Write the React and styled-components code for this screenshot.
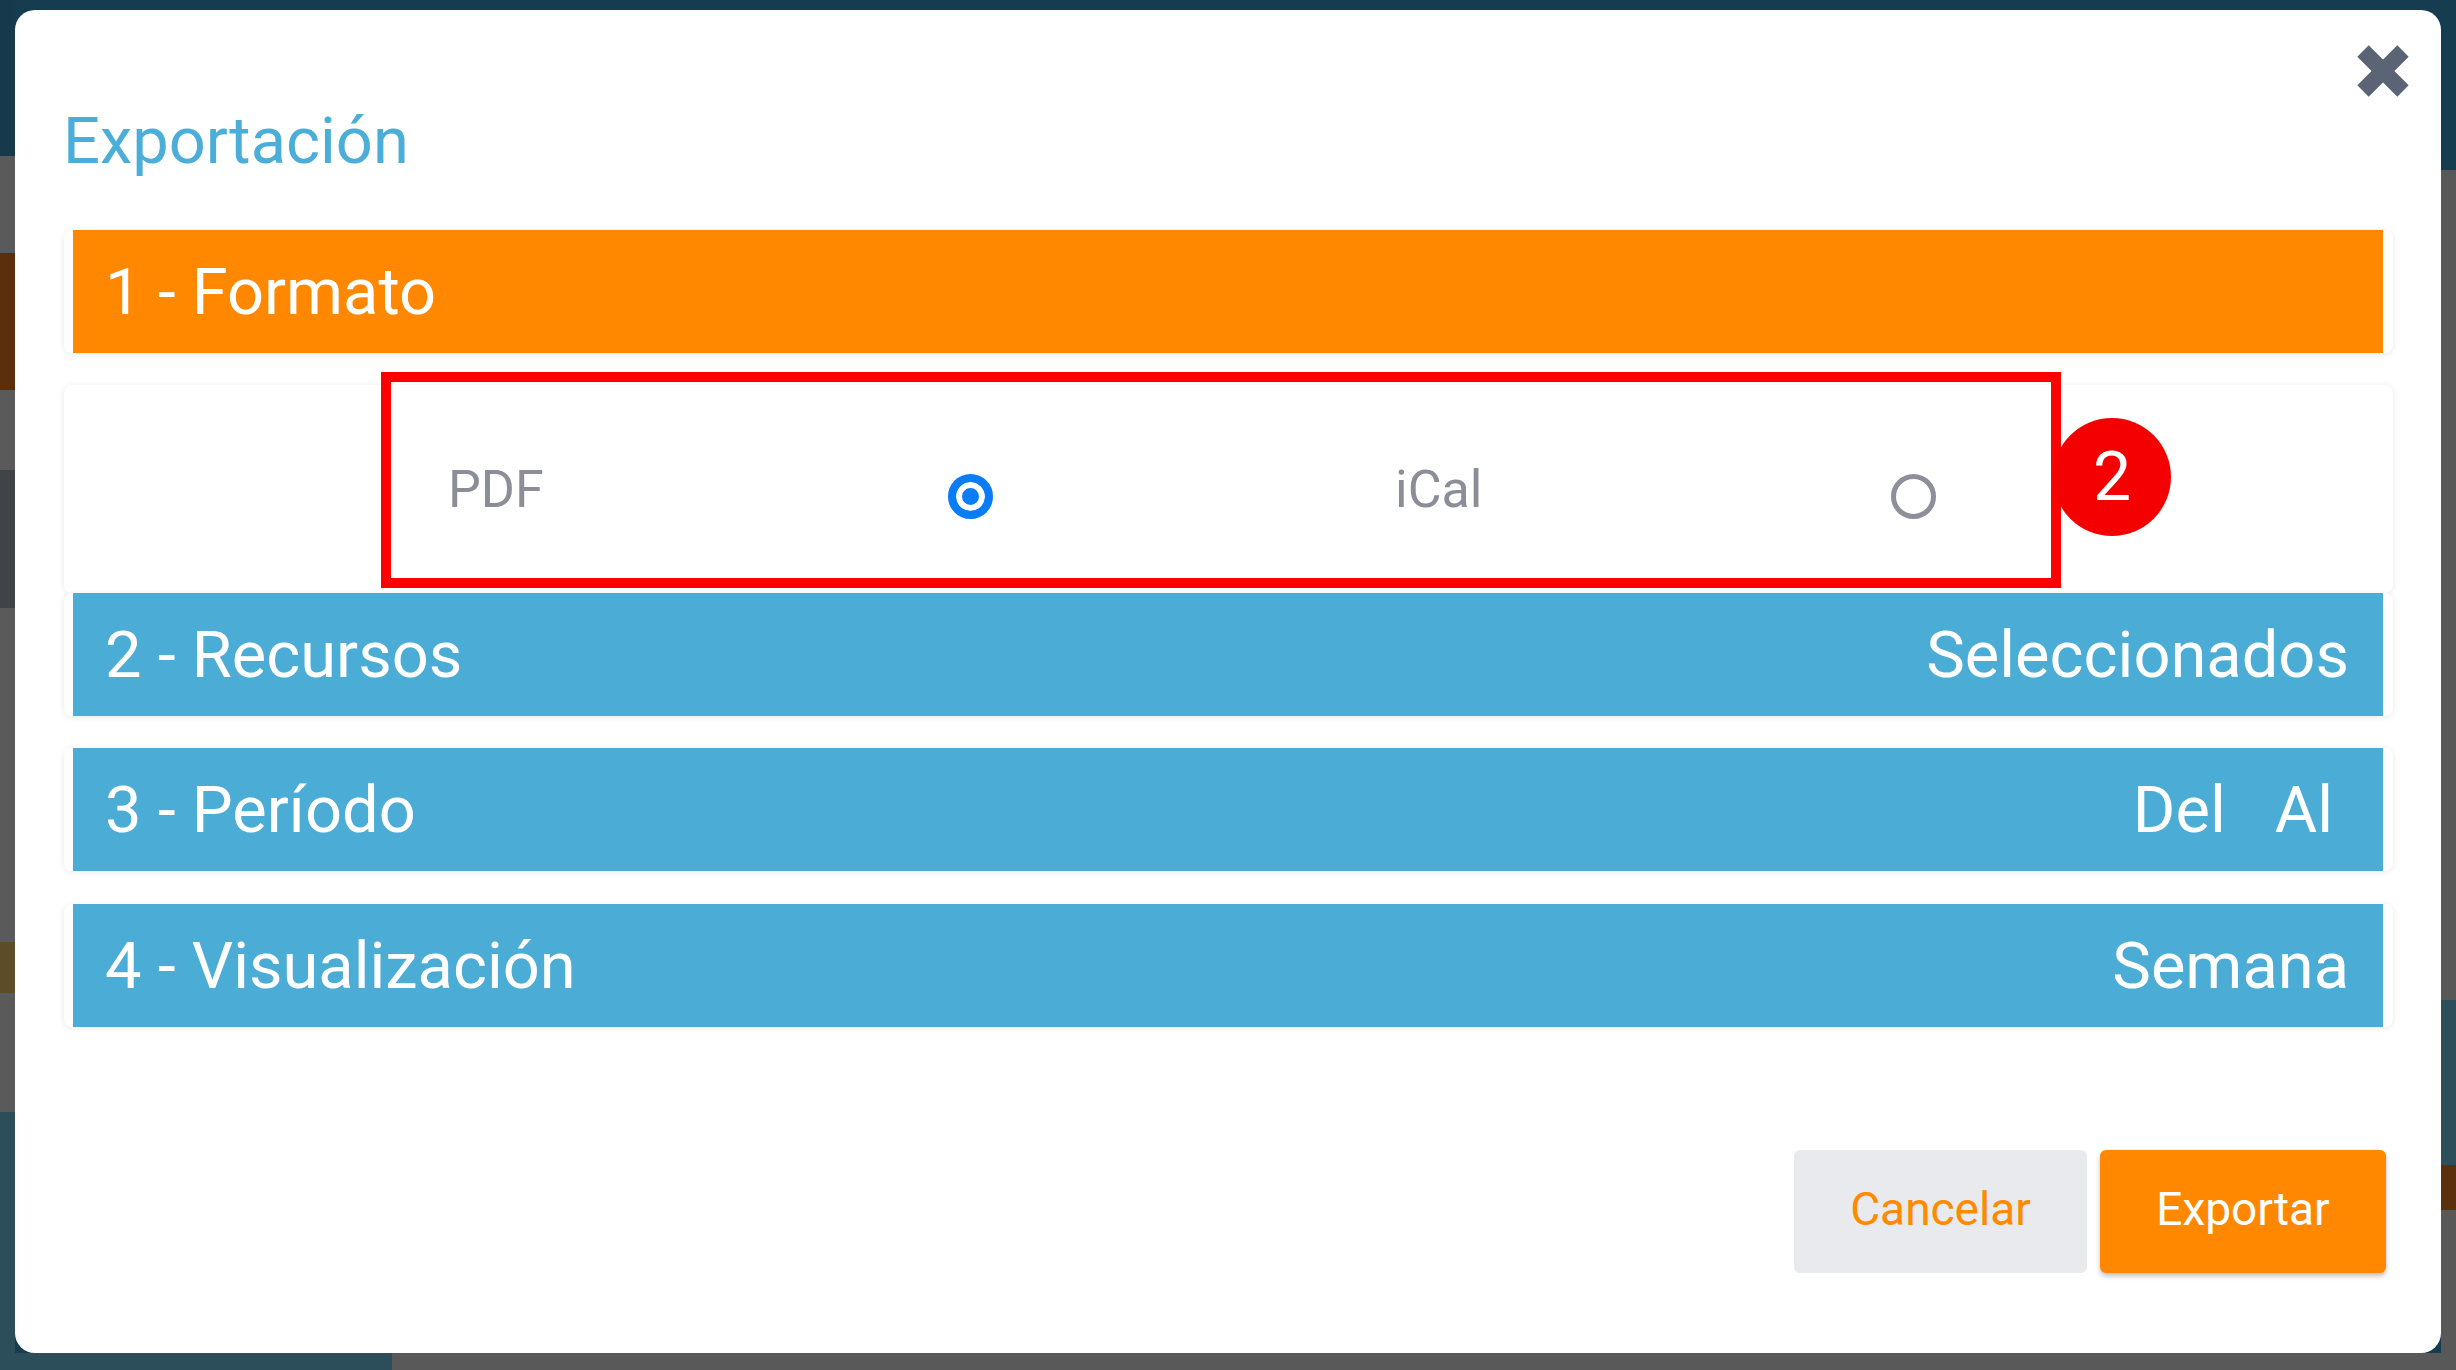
import React from 'react';
import styled, { createGlobalStyle } from 'styled-components';

const Global = createGlobalStyle`
  html, body {
    margin: 0;
    padding: 0;
  }
  body {
    font-family: Roboto, "Liberation Sans", sans-serif;
  }
`

const Backdrop = styled.div`
  box-sizing: border-box;
  width: 2456px;
  height: 1370px;
  padding: 10px 15px 17px 15px;
  background:
    linear-gradient(to bottom,
      #163a4c 0 156px, #5a5a5a 156px 253px, #5b2f0b 253px 390px,
      #5a5a5a 390px 470px, #404347 470px 608px, #5a5a5a 608px 942px,
      #5d4c28 942px 993px, #5a5a5a 993px 1112px, #2c4e5b 1112px) 0 0 / 15px 100% no-repeat,
    linear-gradient(to bottom,
      #163c50 0 170px, #585858 170px 1000px, #2d4f5c 1000px 1165px,
      #5b300c 1165px 1210px, #585858 1210px) right 0 top 0 / 15px 100% no-repeat,
    linear-gradient(to right, #2c4e5b 0 392px, #595959 392px) 0 100% / 100% 17px no-repeat,
    #163c50;
`

const Modal = styled.div`
  box-sizing: border-box;
  height: 100%;
  background: #fff;
  border-radius: 20px;
  padding: 35px 48px 0 49px;
  display: flex;
  flex-direction: column;
`

const TopBar = styled.div`
  display: flex;
  justify-content: flex-end;
  margin-right: -16px;
  height: 52px;
`

const CloseButton = styled.button`
  border: 0;
  background: none;
  padding: 0;
  width: 52px;
  height: 52px;
  cursor: pointer;
  display: block;
`

const Title = styled.h2`
  margin: 7px 0 0 -1px;
  font-size: 65px;
  line-height: 75px;
  font-weight: 400;
  color: #4aaed8;
`

const Accordion = styled.div`
  margin-top: 51px;
  display: flex;
  flex-direction: column;
`

const Card = styled.div`
  position: relative;
  background: #fff;
  border-radius: 8px;
  box-shadow: 0 1px 6px rgba(0, 0, 0, 0.09);
  margin-top: ${p => p.$gap || 0}px;
`

const HeaderBar = styled.div`
  box-sizing: border-box;
  height: 123px;
  margin: 0 10px 0 9px;
  padding: 0 34px 0 32px;
  display: flex;
  align-items: center;
  justify-content: space-between;
  background: ${p => (p.$active ? '#ff8800' : '#4badd5')};
  color: #fff;
  font-size: 65px;
  line-height: 76px;
`

const Range = styled.div`
  display: flex;
  gap: 49px;
  margin-right: 16px;
`

const Body = styled.div`
  box-sizing: border-box;
  height: 208px;
  padding-left: 384px;
  display: flex;
  align-items: center;
  gap: 402px;
`

const Option = styled.label`
  display: flex;
  align-items: center;
`

const OptionLabel = styled.span`
  width: ${p => p.$width}px;
  font-size: 52px;
  line-height: 61px;
  color: #8b8e97;
`

const Radio = styled.span`
  box-sizing: border-box;
  width: 45px;
  height: 45px;
  border-radius: 50%;
  margin-top: 14px;
  border: ${p => (p.$checked ? '8px solid #0a7cf6' : '5px solid #8e8f9b')};
  background: ${p => (p.$checked ? '#0a7cf6' : '#fff')};
  box-shadow: ${p => (p.$checked ? 'inset 0 0 0 6px #fff' : 'none')};
`

const Highlight = styled.div`
  position: absolute;
  left: 317px;
  top: -13px;
  width: 1680px;
  height: 216px;
  box-sizing: border-box;
  border: 10px solid #ff0000;
  pointer-events: none;
`

const Badge = styled.div`
  position: absolute;
  left: 1989px;
  top: 33px;
  width: 118px;
  height: 118px;
  border-radius: 50%;
  background: #f50000;
  color: #fff;
  font-size: 68px;
  line-height: 118px;
  text-align: center;
`

const Footer = styled.div`
  margin-top: 123px;
  margin-right: 7px;
  display: flex;
  justify-content: flex-end;
  gap: 13px;
`

const Button = styled.button`
  height: 123px;
  width: ${p => p.$width}px;
  border: 0;
  border-radius: 6px;
  padding: 0 0 5px;
  font-family: Roboto, "Liberation Sans", sans-serif;
  font-size: 46px;
  cursor: pointer;
  background: ${p => (p.$primary ? '#ff8800' : '#e9eaee')};
  color: ${p => (p.$primary ? '#fff' : '#ff8a00')};
  box-shadow: ${p => (p.$primary ? '0 3px 5px rgba(0,0,0,0.25)' : 'none')};
`

const CloseIcon = () => (
  <svg width="52" height="52" viewBox="0 0 52 52">
    <g stroke="#5a6474" strokeWidth="16" strokeLinecap="butt">
      <line x1="6" y1="6" x2="46" y2="46" />
      <line x1="46" y1="6" x2="6" y2="46" />
    </g>
  </svg>
)

export default function App() {
  return (
    <Backdrop>
      <Global />
      <Modal>
        <TopBar>
          <CloseButton aria-label="Cerrar"><CloseIcon /></CloseButton>
        </TopBar>
        <Title>Exportación</Title>
        <Accordion>
          <Card>
            <HeaderBar $active>1 - Formato</HeaderBar>
          </Card>
          <Card $gap={32}>
            <Body>
              <Option>
                <OptionLabel $width={500}>PDF</OptionLabel>
                <Radio $checked />
              </Option>
              <Option>
                <OptionLabel $width={496}>iCal</OptionLabel>
                <Radio />
              </Option>
            </Body>
            <Highlight />
            <Badge>2</Badge>
          </Card>
          <Card>
            <HeaderBar>
              <span>2 - Recursos</span>
              <span>Seleccionados</span>
            </HeaderBar>
          </Card>
          <Card $gap={32}>
            <HeaderBar>
              <span>3 - Período</span>
              <Range><span>Del</span><span>Al</span></Range>
            </HeaderBar>
          </Card>
          <Card $gap={33}>
            <HeaderBar>
              <span>4 - Visualización</span>
              <span>Semana</span>
            </HeaderBar>
          </Card>
        </Accordion>
        <Footer>
          <Button $width={293}>Cancelar</Button>
          <Button $primary $width={286}>Exportar</Button>
        </Footer>
      </Modal>
    </Backdrop>
  )
}
